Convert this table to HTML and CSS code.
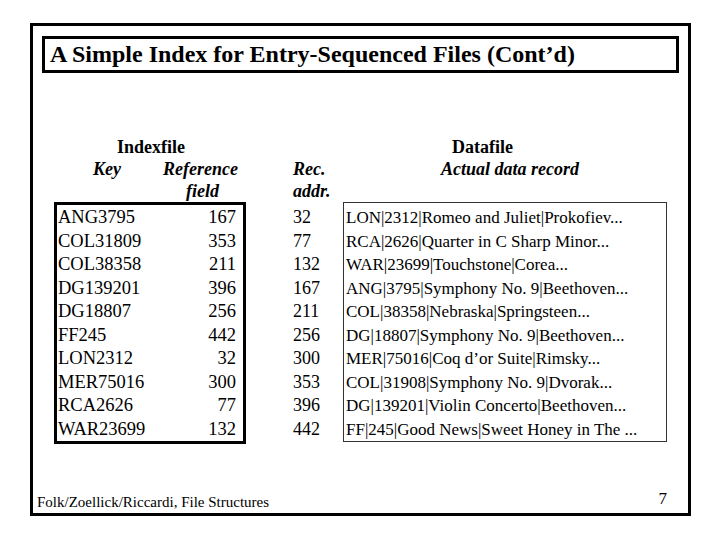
FILE: index.html
```html
<!DOCTYPE html>
<html lang="en">
<head>
<meta charset="utf-8">
<title>A Simple Index for Entry-Sequenced Files</title>
<link rel="stylesheet" href="styles.css">
</head>
<body>
<div class="frame">
  <div class="title">A Simple Index for Entry-Sequenced Files (Cont’d)</div>
  <div class="content">
    <section class="indexfile">
      <div class="hd hd-center">Indexfile</div>
      <div class="hd hd-i"><span class="key-h">Key</span><span>Reference</span></div>
      <div class="hd hd-i"><span class="field-h">field</span></div>
      <div class="index-box">
        <div class="irow"><span>ANG3795</span><span>167</span></div>
        <div class="irow"><span>COL31809</span><span>353</span></div>
        <div class="irow"><span>COL38358</span><span>211</span></div>
        <div class="irow"><span>DG139201</span><span>396</span></div>
        <div class="irow"><span>DG18807</span><span>256</span></div>
        <div class="irow"><span>FF245</span><span>442</span></div>
        <div class="irow"><span>LON2312</span><span>32</span></div>
        <div class="irow"><span>MER75016</span><span>300</span></div>
        <div class="irow"><span>RCA2626</span><span>77</span></div>
        <div class="irow"><span>WAR23699</span><span>132</span></div>
      </div>
    </section>
    <section class="datafile">
      <div class="hd"><span class="datafile-h">Datafile</span></div>
      <div class="hd hd-i"><span class="rec-h">Rec.</span><span>Actual data record</span></div>
      <div class="hd hd-i">addr.</div>
      <div class="data-body">
        <div class="addr-col">
          <div>32</div><div>77</div><div>132</div><div>167</div><div>211</div>
          <div>256</div><div>300</div><div>353</div><div>396</div><div>442</div>
        </div>
        <div class="data-box">
          <div>LON|2312|Romeo and Juliet|Prokofiev...</div>
          <div>RCA|2626|Quarter in C Sharp Minor...</div>
          <div>WAR|23699|Touchstone|Corea...</div>
          <div>ANG|3795|Symphony No. 9|Beethoven...</div>
          <div>COL|38358|Nebraska|Springsteen...</div>
          <div>DG|18807|Symphony No. 9|Beethoven...</div>
          <div>MER|75016|Coq d’or Suite|Rimsky...</div>
          <div>COL|31908|Symphony No. 9|Dvorak...</div>
          <div>DG|139201|Violin Concerto|Beethoven...</div>
          <div>FF|245|Good News|Sweet Honey in The ...</div>
        </div>
      </div>
    </section>
  </div>
  <div class="footer">
    <span class="credit">Folk/Zoellick/Riccardi, File Structures</span>
    <span class="page">7</span>
  </div>
</div>
</body>
</html>
```

FILE: styles.css
```css
html, body {
  margin: 0;
  background: #fff;
}
body {
  font-family: "Liberation Serif", "Times New Roman", serif;
  color: #000;
}
.frame {
  box-sizing: border-box;
  width: 661px;
  height: 493px;
  margin: 23px 0 0 30px;
  border: 3px solid #000;
  padding: 10px 0 2px 0;
  display: flex;
  flex-direction: column;
}
.title {
  box-sizing: border-box;
  margin: 0 9px;
  height: 37px;
  border: 3px solid #000;
  padding-left: 5px;
  font-weight: bold;
  font-size: 24px;
  line-height: 31px;
  white-space: nowrap;
}
.content {
  display: flex;
  margin-top: 63px;
  padding-left: 21px;
}
.indexfile {
  width: 192px;
}
.datafile {
  width: 374px;
  margin-left: 47px;
}
.hd {
  font-weight: bold;
  font-size: 18px;
  line-height: 22px;
  height: 22px;
  white-space: nowrap;
}
.hd-i {
  font-style: italic;
}
.hd-center {
  text-align: center;
  padding-left: 2px;
}
.key-h {
  display: inline-block;
  margin-left: 39px;
  width: 70px;
}
.field-h {
  margin-left: 132px;
}
.datafile-h {
  margin-left: 159px;
}
.rec-h {
  display: inline-block;
  width: 148px;
}
.index-box {
  border: 3px solid #000;
  padding: 1px 7px 0 1px;
  font-size: 18.5px;
  line-height: 23.5px;
}
.irow {
  display: flex;
  justify-content: space-between;
}
.data-body {
  display: flex;
}
.addr-col {
  width: 50px;
  padding-top: 4px;
  font-size: 18px;
  line-height: 23.5px;
}
.data-box {
  flex: 1;
  border: 1px solid #333;
  padding: 3px 0 0 2px;
  font-size: 17px;
  line-height: 23.5px;
  white-space: nowrap;
}
.footer {
  margin-top: auto;
  display: flex;
  justify-content: space-between;
  align-items: flex-end;
  padding: 0 21px 0 4px;
}
.credit {
  font-size: 15px;
  line-height: 17px;
}
.page {
  font-size: 17px;
  line-height: 18px;
  margin-bottom: 3px;
}
```
